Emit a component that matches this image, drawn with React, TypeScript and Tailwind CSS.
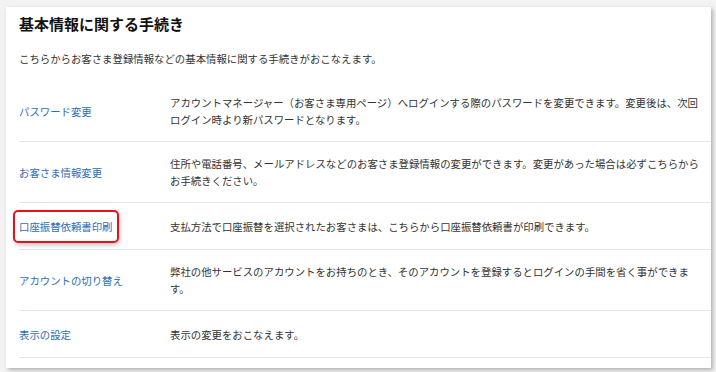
import React from "react";

const rows: { label: string; text: string; boxed?: boolean }[] = [
  {
    label: "パスワード変更",
    text: "アカウントマネージャー（お客さま専用ページ）へログインする際のパスワードを変更できます。変更後は、次回ログイン時より新パスワードとなります。",
  },
  {
    label: "お客さま情報変更",
    text: "住所や電話番号、メールアドレスなどのお客さま登録情報の変更ができます。変更があった場合は必ずこちらからお手続きください。",
  },
  {
    label: "口座振替依頼書印刷",
    text: "支払方法で口座振替を選択されたお客さまは、こちらから口座振替依頼書が印刷できます。",
    boxed: true,
  },
  {
    label: "アカウントの切り替え",
    text: "弊社の他サービスのアカウントをお持ちのとき、そのアカウントを登録するとログインの手間を省く事ができます。",
  },
  {
    label: "表示の設定",
    text: "表示の変更をおこなえます。",
  },
];

export default function App() {
  return (
    <div
      className="w-[716px] h-[372px] bg-[#f3f3f3] pt-[7px] pl-[6px] overflow-hidden"
      style={{ fontFamily: '"Noto Sans CJK JP", "Noto Sans", sans-serif' }}
    >
      <div className="w-[705px] h-[361px] bg-white shadow-[2px_2px_4px_rgba(0,0,0,0.28)] pl-[13px] pt-[6px]">
        <h1 className="text-[15px] leading-[22px] font-bold text-[#111]">基本情報に関する手続き</h1>
        <p className="mt-[15px] text-[10.4px] leading-[17px] text-[#333]">
          こちらからお客さま登録情報などの基本情報に関する手続きがおこなえます。
        </p>
        <div className="mt-[14px]">
          {rows.map((r) => (
            <div
              key={r.label}
              className="flex items-center min-h-[47px] py-[13px] border-b border-[#e1e7ee] text-[10.4px] leading-[17px]"
            >
              <div className="w-[151px] shrink-0 flex">
                <span className="relative block text-[#2e6db4]">
                  {r.label}
                  {r.boxed && (
                    <span className="absolute -left-[6px] -right-[6px] -top-[8px] -bottom-[8px] rounded-[5px] border-2 border-[#e5121b] shadow-[1px_2px_4px_rgba(0,0,0,0.25)]" />
                  )}
                </span>
              </div>
              <div className="w-[535px] text-[#333]">{r.text}</div>
            </div>
          ))}
        </div>
      </div>
    </div>
  );
}
